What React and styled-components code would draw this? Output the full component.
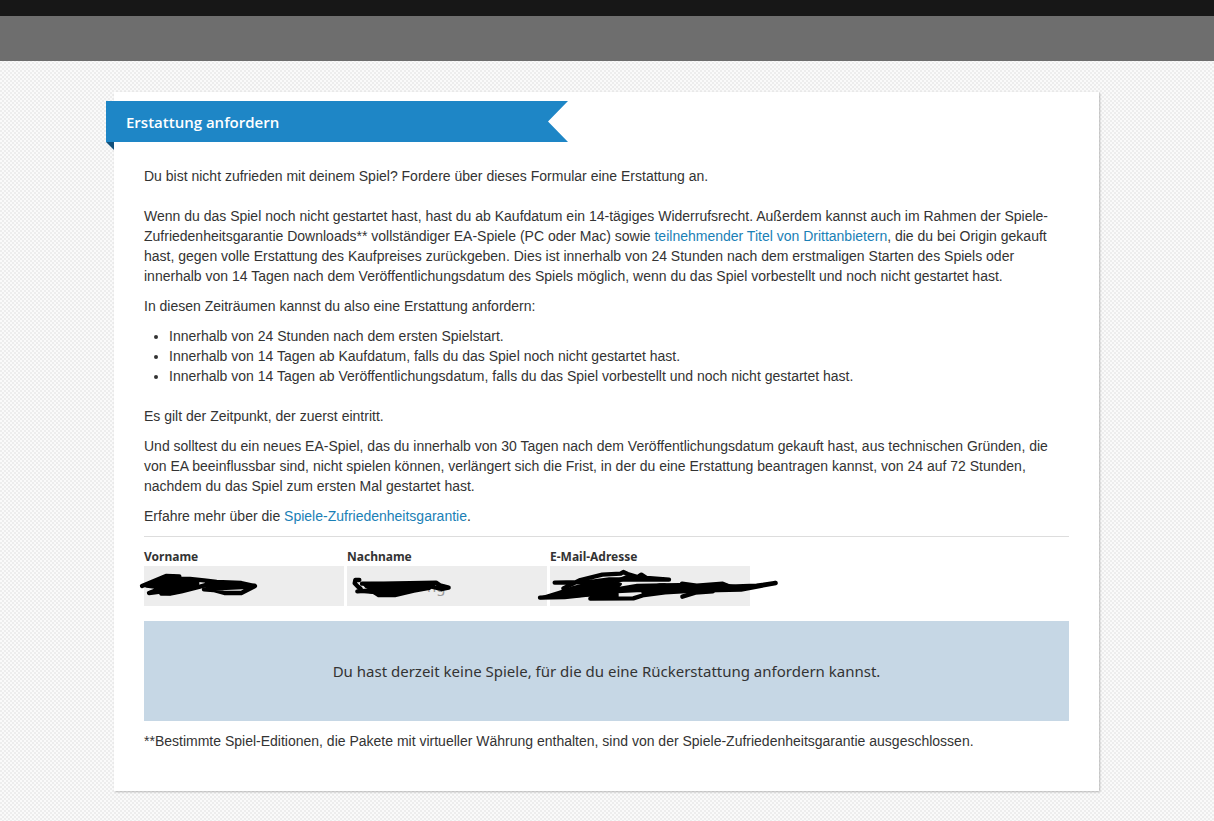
import React from 'react';
import styled, { createGlobalStyle } from 'styled-components';

const heading = '"Noto Sans", "Open Sans", sans-serif';

const GlobalStyle = createGlobalStyle`
  *, *::before, *::after { box-sizing: border-box; }
  body {
    margin: 0;
    min-height: 100vh;
    color: #333;
    font: 14px/20px "Liberation Sans", Arial, sans-serif;
    background: repeating-conic-gradient(#ededed 0 25%, #fafafa 0 50%) 0 0 / 4px 4px;
  }
`;

const TopStrip = styled.div`
  height: 16px;
  background: #171717;
`;

const NavBar = styled.header`
  height: 45px;
  background: #6e6e6e;
`;

const Page = styled.main`
  padding: 31px 115px 30px 114px;
`;

const Card = styled.section`
  padding: 9px 0 40px;
  background: #fff;
  box-shadow: 1px 1px 2px rgba(0, 0, 0, 0.25);
`;

const Ribbon = styled.div`
  width: 462px;
  max-width: 100%;
  margin-left: -8px;
`;

const Title = styled.h1`
  margin: 0;
  padding: 0 20px;
  color: #fff;
  background: #1e86c6;
  font: 600 15px/42px "Open Sans", "Noto Sans", sans-serif;
  height: 41px;
  clip-path: polygon(0 0, 100% 0, calc(100% - 20px) 50%, 100% 100%, 0 100%);
`;

const Fold = styled.div`
  width: 8px;
  height: 8px;
  background: #12507a;
  clip-path: polygon(0 0, 100% 0, 100% 100%);
`;

const Content = styled.div`
  padding: 16px 30px 0;
`;

const Paragraph = styled.p`
  margin: 0 0 ${(p) => (p.$wide ? '20px' : '10px')};
`;

const List = styled.ul`
  margin: 0 0 20px;
  padding: 0 0 0 25px;
`;

const Link = styled.a`
  color: #1a80b6;
  text-decoration: none;
`;

const Form = styled.form`
  display: flex;
  flex-wrap: wrap;
  gap: 3px;
  padding-top: 9px;
  border-top: 1px solid #ddd;
`;

const Field = styled.div`
  position: relative;
  width: 200px;
`;

const Label = styled.label`
  display: block;
  height: 20px;
  font: bold 12px/22px ${heading};
`;

const Input = styled.input`
  display: block;
  width: 100%;
  height: 40px;
  padding: 0 10px 0 ${(p) => (p.$indent ? '80px' : '10px')};
  border: 0;
  border-radius: 0;
  color: #999;
  background: #ededed;
  font: 15px/20px ${heading};
`;

const Scribble = styled.svg`
  position: absolute;
  z-index: 1;
  top: -6px;
  left: ${(p) => p.$left};
  width: 260px;
  height: 80px;
  pointer-events: none;
  fill: none;
  stroke: #000;
  stroke-width: 13;
  stroke-linecap: round;
  stroke-linejoin: round;
`;

const Blob = styled.path`
  fill: #000;
  stroke-width: 8;
`;

const Notice = styled.div`
  display: flex;
  align-items: center;
  justify-content: center;
  min-height: 100px;
  margin: 15px 0 10px;
  background: #c6d7e5;
  font: 15px/20px ${heading};
`;

const fields = [
  {
    id: 'vorname',
    label: 'Vorname',
    left: '-14px',
    blob: 'M94 112 L132 107 L156 120 L204 121 L204 138 L154 154 L120 162 L94 160 L112 148 L90 138 L84 124 Z M228 123 L330 133 L324 142 L232 140 Z',
    paths: [
      'M36 138 L108 108 L148 109 L132 123 L90 129 L50 137 L98 143 L57 159 L115 152 L148 145 L94 161 L120 161 L154 154 L210 140 L248 129',
      'M151 117 L180 117 L222 121 L260 126 L334 129 L375 138 L334 159 L283 159 L250 150 L222 148 L256 145 L338 141 L374 137',
    ],
  },
  {
    id: 'nachname',
    label: 'Nachname',
    left: '-7px',
    value: 'ng',
    blob: 'M70 130 L288 129 L268 146 L222 154 L165 168 L116 168 L100 158 L52 154 L100 150 L78 140 Z',
    paths: [
      'M58 120 L46 120 L44 130 L54 140 L62 146',
      'M66 131 L132 131 L288 128 L300 136 L326 143 L304 147 L262 137',
      'M52 154 L84 152 L120 160',
    ],
  },
  {
    id: 'email',
    label: 'E-Mail-Adresse',
    left: '-20px',
    blob: 'M182 128 L240 124 L272 132 L260 144 L342 146 L390 134 L450 133 L470 146 L404 158 L370 156 L342 166 L336 152 L262 156 L262 174 L182 174 L190 164 L120 170 L30 174 L88 156 L130 142 Z M456 138 L578 134 L640 142 L630 148 L560 150 L456 148 Z',
    paths: [
      'M74 128 L182 126 L238 118 L417 119 L350 114 L334 104 L323 111 L293 102 L280 96 L272 101 L217 104 L151 120 L100 145',
      'M30 173 L104 171 L180 163',
      'M456 131 L500 137 L578 131 L600 140 L680 137 L737 129 L633 149 L496 152 L405 157 L342 165 L310 175 L181 176',
      'M260 148 L322 138 L404 136 M457 170 L496 158 L548 154 M260 124 L290 112 L340 112',
    ],
  },
];

export default function App() {
  return (
    <>
      <GlobalStyle />
      <TopStrip />
      <NavBar />
      <Page>
        <Card>
          <Ribbon>
            <Title>Erstattung anfordern</Title>
            <Fold />
          </Ribbon>
          <Content>
            <Paragraph $wide>
              Du bist nicht zufrieden mit deinem Spiel? Fordere über dieses Formular eine Erstattung an.
            </Paragraph>
            <Paragraph>
              Wenn du das Spiel noch nicht gestartet hast, hast du ab Kaufdatum ein 14-tägiges Widerrufsrecht.
              Außerdem kannst auch im Rahmen der Spiele-Zufriedenheitsgarantie Downloads** vollständiger EA-Spiele
              (PC oder Mac) sowie <Link href="#titel">teilnehmender Titel von Drittanbietern</Link>, die du bei
              Origin gekauft hast, gegen volle Erstattung des Kaufpreises zurückgeben. Dies ist innerhalb von 24
              Stunden nach dem erstmaligen Starten des Spiels oder innerhalb von 14 Tagen nach dem
              Veröffentlichungsdatum des Spiels möglich, wenn du das Spiel vorbestellt und noch nicht gestartet hast.
            </Paragraph>
            <Paragraph>In diesen Zeiträumen kannst du also eine Erstattung anfordern:</Paragraph>
            <List>
              <li>Innerhalb von 24 Stunden nach dem ersten Spielstart.</li>
              <li>Innerhalb von 14 Tagen ab Kaufdatum, falls du das Spiel noch nicht gestartet hast.</li>
              <li>
                Innerhalb von 14 Tagen ab Veröffentlichungsdatum, falls du das Spiel vorbestellt und noch nicht
                gestartet hast.
              </li>
            </List>
            <Paragraph>Es gilt der Zeitpunkt, der zuerst eintritt.</Paragraph>
            <Paragraph>
              Und solltest du ein neues EA-Spiel, das du innerhalb von 30 Tagen nach dem Veröffentlichungsdatum
              gekauft hast, aus technischen Gründen, die von EA beeinflussbar sind, nicht spielen können, verlängert
              sich die Frist, in der du eine Erstattung beantragen kannst, von 24 auf 72 Stunden, nachdem du das
              Spiel zum ersten Mal gestartet hast.
            </Paragraph>
            <Paragraph>
              Erfahre mehr über die <Link href="#garantie">Spiele-Zufriedenheitsgarantie</Link>.
            </Paragraph>
            <Form>
              {fields.map((field) => (
                <Field key={field.id}>
                  <Label htmlFor={field.id}>{field.label}</Label>
                  <Input id={field.id} readOnly defaultValue={field.value} $indent={Boolean(field.value)} />
                  <Scribble $left={field.left} viewBox="0 0 780 240" aria-hidden="true">
                    <Blob d={field.blob} />
                    {field.paths.map((d) => (
                      <path key={d} d={d} />
                    ))}
                  </Scribble>
                </Field>
              ))}
            </Form>
            <Notice>Du hast derzeit keine Spiele, für die du eine Rückerstattung anfordern kannst.</Notice>
            <div>
              **Bestimmte Spiel-Editionen, die Pakete mit virtueller Währung enthalten, sind von der
              Spiele-Zufriedenheitsgarantie ausgeschlossen.
            </div>
          </Content>
        </Card>
      </Page>
    </>
  );
}
